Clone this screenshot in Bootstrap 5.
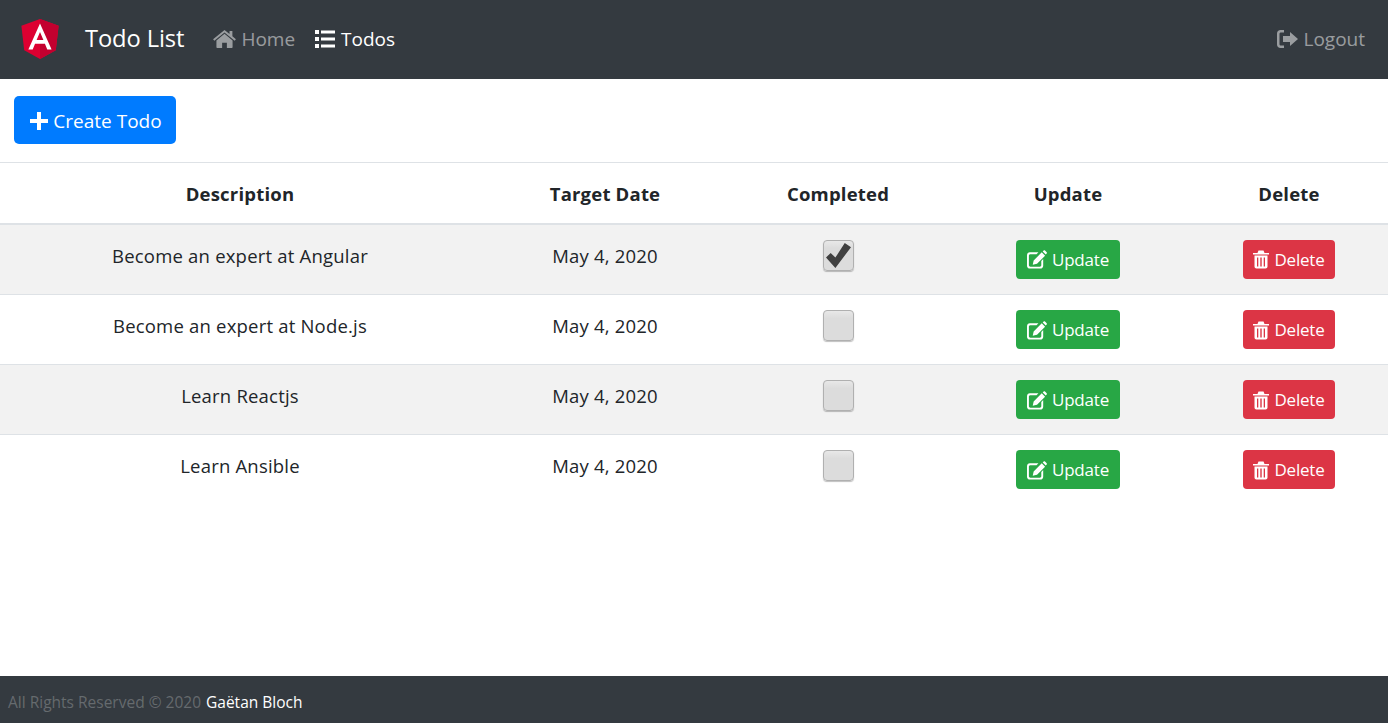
<!DOCTYPE html>
<html lang="en">
<head>
  <meta charset="utf-8" />
  <title>Todo List</title>
  <link href="https://cdn.jsdelivr.net/npm/bootstrap@5.3.0/dist/css/bootstrap.min.css" rel="stylesheet" />
  <style>
    body { font-family: "Open Sans", "Noto Sans", sans-serif; font-size: 18.5px; color: #212529; min-height: 100vh; letter-spacing: 0.2px; }
    .top-bar { height: 79px; background: #343a40; padding: 0 23px 1px 21px; }
    .top-bar .navbar-brand { font-size: 23.7px; letter-spacing: -0.1px; color: #fff; padding: 0 0 1px; margin: 0 29px 0 26px; }
    .top-bar .nav-link { color: rgba(255,255,255,.5); font-size: 19px; letter-spacing: 0; padding: 0; display: flex; align-items: center; gap: 5px; }
    .top-bar .nav-link.active { color: #fff; gap: 6px; }
    .nav-gap { gap: 20px; }
    .ico { fill: currentColor; flex: none; }
    .create-row { padding: 17px 14px 18px; }
    .btn-create { background: #007bff; color: #fff; font-size: 19px; letter-spacing: 0; height: 48px; width: 162px; padding: 2px 0 0 2px; border: 0; border-radius: 5px; display: flex; align-items: center; justify-content: center; gap: 5px; }
    .btn-create:hover { background: #0069d9; color: #fff; }
    .todo-table { table-layout: fixed; margin: 0; text-align: center; --bs-table-striped-bg: #f2f2f2; }
    .todo-table th { font-size: 18.5px; height: 61px; font-weight: 700; vertical-align: middle; border-top: 1px solid #dee2e6; border-bottom: 2px solid #dee2e6; padding: 2px 0 0; }
    .todo-table td { height: 70px; padding: 13px 0 0; vertical-align: top; border-bottom: 0; border-top: 0; }
    .todo-table tbody tr:first-child td { height: 71px; }
    .todo-table tbody tr + tr td { border-top: 1px solid #dee2e6; }
    .cell-text { display: block; line-height: 28px; margin-top: 4px; }
    .fake-check { appearance: none; display: block; margin: 2px auto 0; width: 31px; height: 31px; border: 1px solid #b0b0b0; border-radius: 4px; background: linear-gradient(#e8e8e8, #dcdcdc 25%); box-shadow: 0 1px 1px rgba(0,0,0,.25); }
    .fake-check:checked { background-repeat: no-repeat; background-position: center; background-image: url("data:image/svg+xml,%3Csvg xmlns='http://www.w3.org/2000/svg' width='25' height='25' viewBox='0 0 24 24'%3E%3Cpath fill='%23404040' d='M9 24 0 14l4.500-4.500L9 14 18 0l6 4z'/%3E%3C/svg%3E"), linear-gradient(#e8e8e8, #dcdcdc 25%); }
    .btn-row { font-size: 17px; letter-spacing: -0.2px; height: 39px; color: #fff; padding: 1px 0 0; border: 0; border-radius: 4px; display: inline-flex; align-items: center; justify-content: center; gap: 5px; margin-top: 2px; }
    .btn-upd { background: #28a745; width: 104px; }
    .btn-del { background: #dc3545; width: 92px; }
    .site-foot { height: 47px; background: #343a40; color: rgba(255,255,255,.25); font-size: 15.5px; letter-spacing: 0; padding: 6px 8px 0; display: flex; align-items: center; gap: 5px; }
    .site-foot span { color: #fff; }
  </style>
</head>
<body class="d-flex flex-column">
  <nav class="navbar top-bar flex-nowrap justify-content-start">
    <svg width="38" height="40" viewBox="31 30 188 200" aria-hidden="true">
      <polygon fill="#DD0031" points="125,30 31.9,63.2 46.1,186.3 125,230 203.9,186.3 218.1,63.2"/>
      <polygon fill="#C3002F" points="125,30 125,52.2 125,52.1 125,153.4 125,230 203.9,186.3 218.1,63.2"/>
      <path fill="#fff" d="M125 52.1L66.8 182.6h21.7l11.7-29.2h49.4l11.7 29.2H183L125 52.1zm17 83.3h-34l17-40.9 17 40.9z"/>
    </svg>
    <a class="navbar-brand" href="#">Todo List</a>
    <div class="d-flex nav-gap">
      <a class="nav-link" href="#">
        <svg class="ico" width="23" height="19" viewBox="0 0 24 20"><path d="M12 4 3.500 11v7.200c0 .5.3.8.8.8H9.500v-5.500h5V19h5.200c.5 0 .8-.3.8-.8V11zM24 9.800 20.300 6.700V1h-3v3.200L12 0 0 9.800l1.300 1.600L12 2.700l10.700 8.700z"/></svg>
        Home</a>
      <a class="nav-link active" href="#">
        <svg class="ico" width="20" height="18" viewBox="0 0 20 18"><path d="M0 0h4v4H0zM0 7h4v4H0zM0 14h4v4H0zM6 .5h14v3H6zM6 7.500h14v3H6zM6 14.500h14v3H6z"/></svg>
        Todos</a>
    </div>
    <a class="nav-link ms-auto" href="#">
      <svg class="ico" width="21" height="18" viewBox="0 0 21 18"><path d="M7 0v2.500H4C3 2.500 2.500 3 2.500 4v10c0 1 .5 1.500 1.500 1.500h3V18H3.500C1.500 18 0 16.500 0 14.500v-11C0 1.500 1.500 0 3.500 0zM13 2l8 7-8 7v-4H6V6h7z"/></svg>
      Logout</a>
  </nav>

  <div class="create-row">
    <a class="btn btn-create" href="#">
      <svg class="ico" width="18" height="18" viewBox="0 0 18 18"><path d="M7 0h4v7h7v4h-7v7H7v-7H0V7h7z"/></svg>
      Create Todo</a>
  </div>

  <table class="table table-striped todo-table">
    <colgroup>
      <col style="width: 480px" /><col style="width: 250px" /><col style="width: 216px" /><col style="width: 244px" /><col style="width: 198px" />
    </colgroup>
    <thead>
      <tr><th>Description</th><th>Target Date</th><th>Completed</th><th>Update</th><th>Delete</th></tr>
    </thead>
    <tbody id="todo-body"></tbody>
  </table>

  <footer class="site-foot mt-auto">All Rights Reserved © 2020 <span>Gaëtan Bloch</span></footer>

  <script>
    const todos = [
      ["Become an expert at Angular", true],
      ["Become an expert at Node.js", false],
      ["Learn Reactjs", false],
      ["Learn Ansible", false]
    ];
    const editIcon = '<svg class="ico" width="20" height="19" viewBox="0 0 21 19"><path d="M3 2h9l-2 2H3.500C2.700 4 2 4.700 2 5.500v10c0 .8.700 1.500 1.500 1.500h10c.8 0 1.500-.7 1.500-1.500V11l2-2v7c0 1.700-1.300 3-3 3H3c-1.700 0-3-1.300-3-3V5c0-1.700 1.300-3 3-3zM15.500 2l3.500 3.500-8.500 8.500L6 15l1-4.500zM16.500 1l1-1c.4-.3 1-.3 1.400 0l1.800 1.800c.3.4.3 1 0 1.400l-1 1z"/></svg>';
    const trashIcon = '<svg class="ico" width="16" height="19" viewBox="0 0 16 18"><path d="M0 2.500h4.500L5.500 0h5l1 2.500H16V4H0zM1.500 5h13v11c0 1.200-.8 2-2 2h-9c-1.200 0-2-.8-2-2zM4 7v9h1.300V7zm3.300 0v9h1.400V7zm3.400 0v9H12V7z"/></svg>';
    const body = document.getElementById("todo-body");
    todos.forEach(([desc, done]) => {
      const tr = document.createElement("tr");
      tr.innerHTML = `
        <td><span class="cell-text">${desc}</span></td>
        <td><span class="cell-text">May 4, 2020</span></td>
        <td><input type="checkbox" class="fake-check" ${done ? "checked" : ""} disabled /></td>
        <td><button class="btn btn-row btn-upd">${editIcon} Update</button></td>
        <td><button class="btn btn-row btn-del">${trashIcon} Delete</button></td>
      `;
      body.appendChild(tr);
    });
  </script>
  <script src="https://cdn.jsdelivr.net/npm/bootstrap@5.3.0/dist/js/bootstrap.bundle.min.js"></script>
</body>
</html>
